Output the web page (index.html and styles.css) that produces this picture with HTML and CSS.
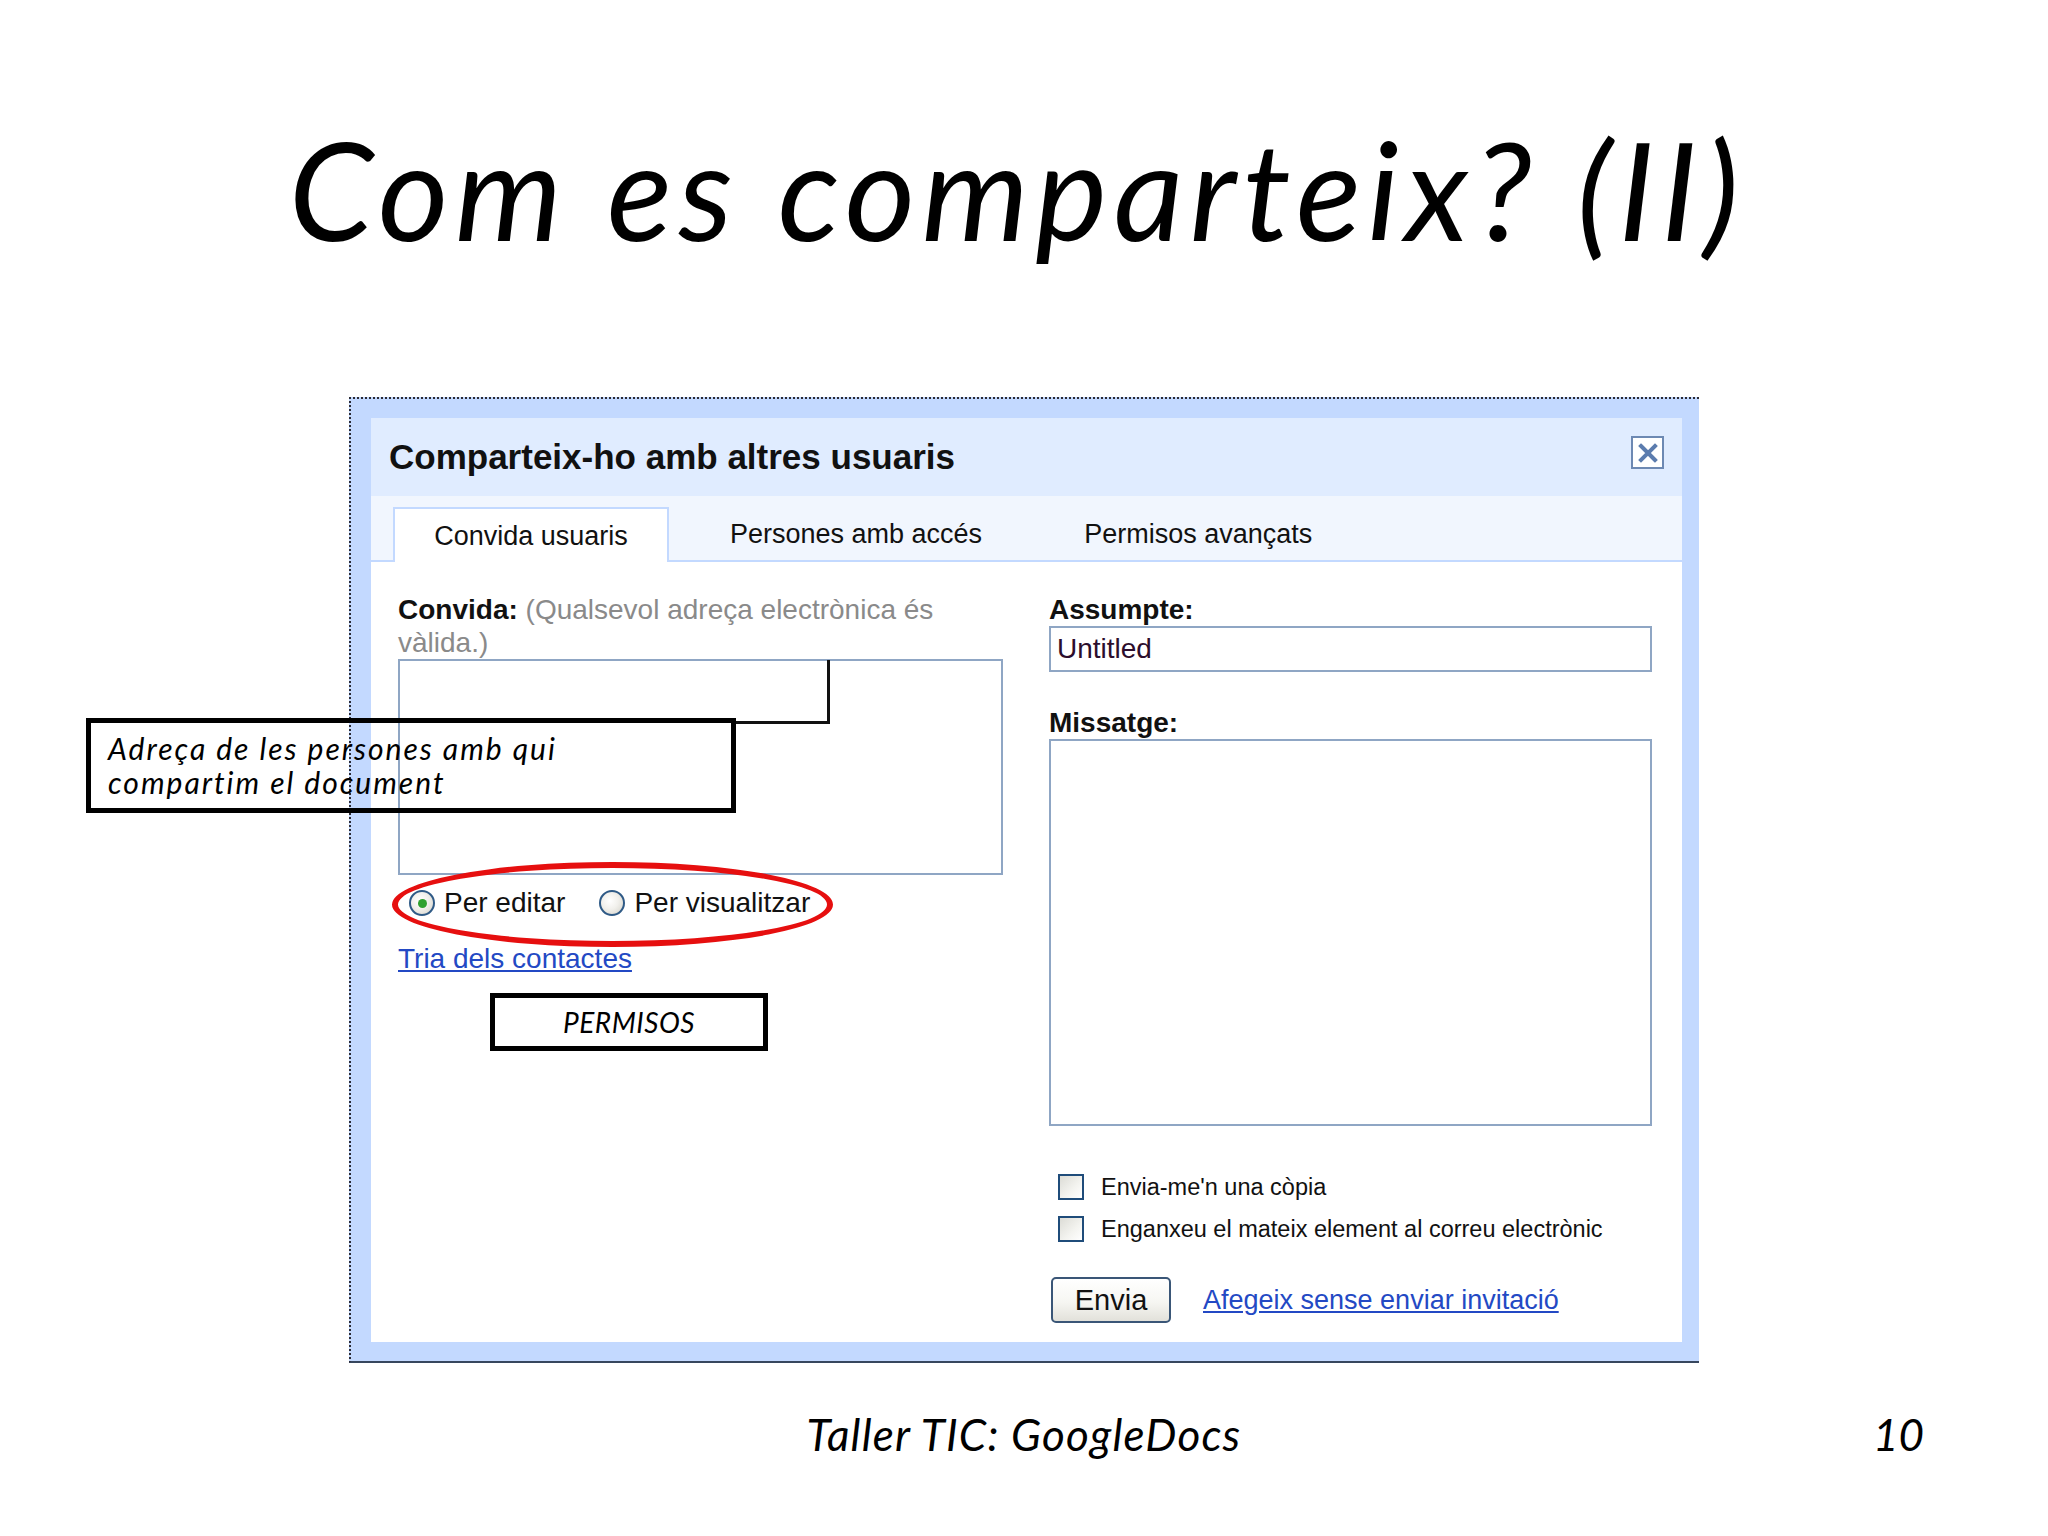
FILE: index.html
```html
<!DOCTYPE html>
<html lang="ca">
<head>
<meta charset="utf-8">
<title>Com es comparteix? (II)</title>
<link rel="stylesheet" href="styles.css">
</head>
<body>
<div class="slide">
  <h1 class="slide-title">Com es comparteix? (II)</h1>

  <div class="dialog">
    <div class="dlg-inner">
      <div class="dlg-header">
        <span class="dlg-title">Comparteix-ho amb altres usuaris</span>
        <span class="dlg-close">
          <svg width="22" height="22" viewBox="0 0 22 22"><path d="M4 4 L18 18 M18 4 L4 18" stroke="#5b7cae" stroke-width="4" stroke-linecap="square"/></svg>
        </span>
      </div>
      <div class="dlg-tabs">
        <span class="tab active">Convida usuaris</span>
        <span class="tab">Persones amb accés</span>
        <span class="tab">Permisos avançats</span>
      </div>
      <div class="dlg-content">
        <div class="col-left">
          <div class="field-label"><b>Convida:</b> <span class="hint">(Qualsevol adreça electrònica és</span><br><span class="hint">vàlida.)</span></div>
          <div class="textbox invite"></div>
          <div class="radio-row">
            <span class="radio checked"></span><span class="radio-label first">Per editar</span>
            <span class="radio"></span><span class="radio-label">Per visualitzar</span>
          </div>
          <a class="link contacts" href="#">Tria dels contactes</a>
        </div>
        <div class="col-right">
          <div class="field-label"><b>Assumpte:</b></div>
          <div class="input">Untitled</div>
          <div class="field-label msg"><b>Missatge:</b></div>
          <div class="textbox message"></div>
          <div class="check-row"><span class="checkbox"></span><span>Envia-me'n una còpia</span></div>
          <div class="check-row"><span class="checkbox"></span><span>Enganxeu el mateix element al correu electrònic</span></div>
          <div class="button-row">
            <span class="button">Envia</span>
            <a class="link" href="#">Afegeix sense enviar invitació</a>
          </div>
        </div>
      </div>
    </div>
  </div>

  <div class="footer">
    <span></span>
    <span class="footer-title">Taller TIC: GoogleDocs</span>
    <span class="page-num">10</span>
  </div>

  <!-- annotations drawn over the screenshot -->
  <div class="connector"></div>
  <div class="callout">Adreça de les persones amb qui<br>compartim el document</div>
  <div class="ellipse"></div>
  <div class="permisos">PERMISOS</div>
</div>
</body>
</html>
```

FILE: styles.css
```css
* { box-sizing: border-box; }
html, body { margin: 0; padding: 0; background: #fff; }
.slide {
  position: relative;
  width: 2048px;
  height: 1536px;
  overflow: hidden;
  background: #fff;
}

.slide-title {
  margin: 0;
  padding-top: 121px;
  padding-right: 14px;
  height: 258px;
  font-family: "Lato", "DejaVu Sans", sans-serif;
  font-style: italic;
  font-weight: 400;
  font-size: 136px;
  line-height: 136px;
  letter-spacing: 6.5px;
  text-align: center;
  color: #000;
}

/* ---------- dialog ---------- */
.dialog {
  margin: 139px 0 0 349px;
  width: 1350px;
  height: 966px;
  background: #c3d9ff;
  border-top: 2px dotted #2b2b35;
  border-left: 2px dotted #2b2b35;
  border-bottom: 2px solid #37475e;
  padding: 19px 17px 19px 20px;
  font-family: "Liberation Sans", Arial, sans-serif;
  color: #000;
}
.dlg-inner {
  display: flex;
  flex-direction: column;
  height: 100%;
}
.dlg-header {
  height: 78px;
  background: #e0ecff;
  display: flex;
  justify-content: space-between;
  align-items: center;
  padding: 0 18px 0 18px;
}
.dlg-title {
  font-weight: bold;
  font-size: 35px;
  color: #111;
}
.dlg-close {
  width: 33px;
  height: 33px;
  border: 2px solid #6d89b3;
  background: #fff;
  display: flex;
  align-items: center;
  justify-content: center;
  align-self: flex-start;
  margin-top: 18px;
}
.dlg-tabs {
  height: 66px;
  background: #f1f6fe;
  border-bottom: 2px solid #c3d9ff;
  display: flex;
  align-items: flex-end;
  gap: 20px;
  padding-left: 22px;
}
.tab {
  height: 49px;
  padding: 0 41px;
  font-size: 27px;
  line-height: 46px;
  color: #111;
  white-space: nowrap;
}
.tab.active {
  width: 276px;
  padding: 0;
  text-align: center;
  background: #fff;
  border: 2px solid #c3d9ff;
  border-bottom: none;
  margin-bottom: -2px;
  height: 55px;
  line-height: 54px;
}

.dlg-content {
  flex: 1;
  background: #fff;
  display: grid;
  grid-template-columns: 605px 603px;
  column-gap: 46px;
  padding: 31px 30px 0 27px;
}
.field-label {
  font-size: 28px;
  line-height: 33px;
}
.field-label b { color: #111; }
.hint { color: #8a8a8a; }
.textbox {
  border: 2px solid #8fa6c4;
  background: #fff;
}
.textbox.invite { height: 216px; }
.radio-row {
  margin-top: 8px;
  height: 40px;
  display: flex;
  align-items: center;
  font-size: 28px;
  padding-left: 11px;
}
.radio {
  width: 26px;
  height: 26px;
  border-radius: 50%;
  border: 2px solid #2f5a86;
  background: radial-gradient(circle at 40% 40%, #ffffff 0%, #f1f0ec 45%, #d2d0c6 100%);
  display: inline-flex;
  align-items: center;
  justify-content: center;
  flex: none;
}
.radio.checked::after {
  content: "";
  width: 9px;
  height: 9px;
  border-radius: 50%;
  background: #2fa12f;
}
.radio-label { margin-left: 9px; color: #111; }
.radio-label.first { margin-right: 34px; }
.link {
  color: #2349c4;
  text-decoration: underline;
  font-size: 27px;
}
.contacts {
  display: inline-block;
  margin-top: 19px;
  line-height: 33px;
  font-size: 28px;
}

.input {
  height: 46px;
  border: 2px solid #8fa6c4;
  padding-left: 6px;
  font-size: 28px;
  line-height: 42px;
  color: #2c0d2c;
}
.field-label.msg { margin-top: 34px; }
.textbox.message { height: 387px; }
.check-row {
  height: 42px;
  display: flex;
  align-items: center;
  font-size: 23.5px;
  color: #111;
  padding-left: 9px;
}
.textbox.message + .check-row { margin-top: 40px; }
.checkbox {
  width: 26px;
  height: 26px;
  border: 2px solid #1f4c7a;
  background: linear-gradient(135deg, #dcdcd6 0%, #f4f4f0 60%, #ffffff 100%);
  margin-right: 17px;
  flex: none;
}
.button-row {
  margin-top: 27px;
  display: flex;
  align-items: center;
  padding-left: 2px;
}
.button {
  width: 120px;
  height: 46px;
  border: 2px solid #3a5677;
  border-radius: 5px;
  background: linear-gradient(#ffffff 0%, #f6f6f2 55%, #e2e1da 100%);
  font-size: 29px;
  line-height: 42px;
  text-align: center;
  color: #111;
  margin-right: 32px;
}

/* ---------- footer ---------- */
.footer {
  margin-top: 46px;
  display: grid;
  grid-template-columns: 1fr auto 1fr;
  font-family: "Lato", "DejaVu Sans", sans-serif;
  font-style: italic;
  font-weight: 400;
  font-size: 44px;
  line-height: 50px;
  color: #000;
}
.footer-title { letter-spacing: 1.2px; }
.page-num { justify-self: end; padding-right: 124px; }

/* ---------- annotations over the screenshot ---------- */
.connector {
  position: absolute;
  left: 735px;
  top: 660px;
  width: 95px;
  height: 64px;
  border-right: 3px solid #111;
  border-bottom: 3px solid #111;
}
.callout {
  position: absolute;
  left: 86px;
  top: 718px;
  width: 650px;
  height: 95px;
  border: 5px solid #000;
  padding: 8px 0 0 17px;
  font-family: "Lato", "DejaVu Sans", sans-serif;
  font-style: italic;
  font-weight: 400;
  font-size: 30px;
  line-height: 34px;
  letter-spacing: 2px;
  color: #000;
}
.ellipse {
  position: absolute;
  left: 392px;
  top: 862px;
  width: 441px;
  height: 85px;
  border: 6px solid #e60f0f;
  border-radius: 50%;
}
.permisos {
  position: absolute;
  left: 490px;
  top: 993px;
  width: 278px;
  height: 58px;
  border: 5px solid #000;
  background: #fff;
  font-family: "Lato", "DejaVu Sans", sans-serif;
  font-style: italic;
  font-weight: 400;
  font-size: 28px;
  line-height: 48px;
  letter-spacing: 0.5px;
  text-align: center;
  color: #000;
}
```
